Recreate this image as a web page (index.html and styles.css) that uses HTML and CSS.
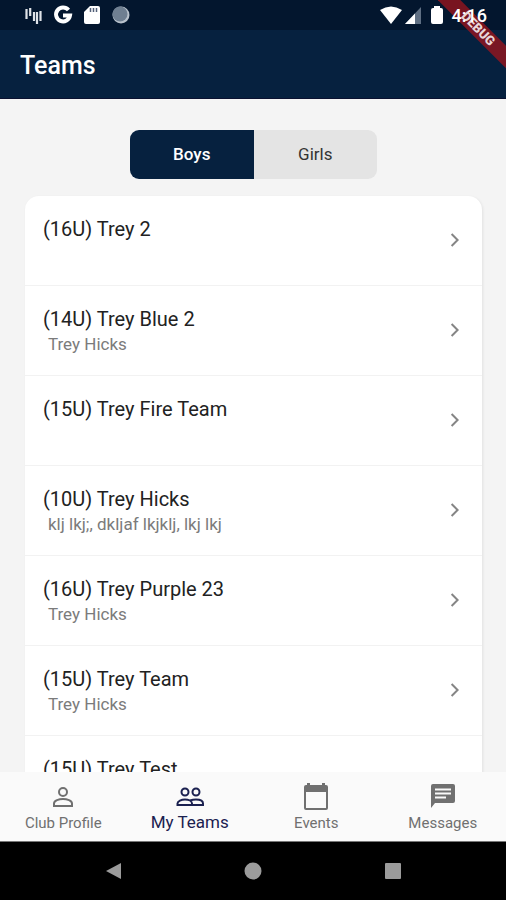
FILE: index.html
```html
<!DOCTYPE html>
<html lang="en">
<head>
    <meta charset="UTF-8">
    <meta name="viewport" content="width=device-width, initial-scale=1.0">
    <title>Teams</title>
    <link rel="stylesheet" href="styles.css">
</head>
<body>
    <div class="debug-corner"><span class="debug-banner">DEBUG</span></div>
    <div class="status-bar">
        <div class="status-left">
            <svg width="18" height="20" viewBox="0 0 18 20" fill="none" stroke="#dfe3e8" stroke-width="2.200">
                <path d="M2.500 4v10M6.200 3v8M10 7v9M13 7v12M16.500 6v10"/>
            </svg>
            <svg width="20" height="20" viewBox="0 0 20 20" fill="none" stroke="#fff" stroke-width="4">
                <path d="M15.500 5A7 7 0 1 0 17 10.500H10"/>
            </svg>
            <svg width="16" height="20" viewBox="0 0 16 20">
                <path fill="#fff" d="M6 1h8q2 0 2 2v14q0 2-2 2H2q-2 0-2-2V7z"/>
                <path stroke="#53617a" stroke-width="1.500" d="M6.500 3v4M9.500 3v4M12.500 3v4"/>
            </svg>
            <svg width="20" height="20" viewBox="0 0 20 20">
                <circle cx="10" cy="10" r="8.500" fill="#b9c2cc"/>
                <circle cx="9" cy="9" r="7.500" fill="#6f7f91"/>
            </svg>
        </div>
        <div class="status-right">
            <svg width="24" height="20" viewBox="0 0 24 20">
                <path fill="#fff" d="M1 5q11-7 22 0L12 19z"/>
            </svg>
            <svg class="signal" width="18" height="20" viewBox="0 0 18 20">
                <path fill="#5f6f83" d="M17 2v17H1z"/>
                <path fill="#fff" d="M11 8.400V19H1z"/>
            </svg>
            <svg class="battery" width="12" height="20" viewBox="0 0 12 20">
                <path fill="#fff" d="M3 1h6v2h1q2 0 2 2v12q0 2-2 2H2q-2 0-2-2V5q0-2 2-2h1z"/>
            </svg>
            <span class="clock">4:16</span>
        </div>
    </div>
    <header>
        <h1>Teams</h1>
    </header>
    <main>
        <div class="toggle">
            <button type="button" class="active">Boys</button>
            <button type="button">Girls</button>
        </div>
        <ul class="team-list">
            <li>
                <a href="#">
                    <div class="team">
                        <h2>(16U) Trey 2</h2>
                    </div>
                    <svg class="chevron" viewBox="0 0 24 24"><path d="M8.600 6l6 6-6 6"/></svg>
                </a>
            </li>
            <li>
                <a href="#">
                    <div class="team">
                        <h2>(14U) Trey Blue 2</h2>
                        <p>Trey Hicks</p>
                    </div>
                    <svg class="chevron" viewBox="0 0 24 24"><path d="M8.600 6l6 6-6 6"/></svg>
                </a>
            </li>
            <li>
                <a href="#">
                    <div class="team">
                        <h2>(15U) Trey Fire Team</h2>
                    </div>
                    <svg class="chevron" viewBox="0 0 24 24"><path d="M8.600 6l6 6-6 6"/></svg>
                </a>
            </li>
            <li>
                <a href="#">
                    <div class="team">
                        <h2>(10U) Trey Hicks</h2>
                        <p>klj lkj;, dkljaf lkjklj, lkj lkj</p>
                    </div>
                    <svg class="chevron" viewBox="0 0 24 24"><path d="M8.600 6l6 6-6 6"/></svg>
                </a>
            </li>
            <li>
                <a href="#">
                    <div class="team">
                        <h2>(16U) Trey Purple 23</h2>
                        <p>Trey Hicks</p>
                    </div>
                    <svg class="chevron" viewBox="0 0 24 24"><path d="M8.600 6l6 6-6 6"/></svg>
                </a>
            </li>
            <li>
                <a href="#">
                    <div class="team">
                        <h2>(15U) Trey Team</h2>
                        <p>Trey Hicks</p>
                    </div>
                    <svg class="chevron" viewBox="0 0 24 24"><path d="M8.600 6l6 6-6 6"/></svg>
                </a>
            </li>
            <li>
                <a href="#">
                    <div class="team">
                        <h2>(15U) Trey Test</h2>
                    </div>
                    <svg class="chevron" viewBox="0 0 24 24"><path d="M8.600 6l6 6-6 6"/></svg>
                </a>
            </li>
        </ul>
    </main>
    <nav class="tabs">
        <a href="#">
            <svg width="28" height="28" viewBox="0 0 28 28" fill="none" stroke="currentColor" stroke-width="2">
                <circle cx="14" cy="9" r="4"/>
                <path d="M5 23v-2.500c0-3 5-4.500 9-4.500s9 1.500 9 4.500V23z"/>
            </svg>
            <span>Club Profile</span>
        </a>
        <a href="#" class="active">
            <svg width="30" height="28" viewBox="0 0 30 28" fill="none" stroke="currentColor" stroke-width="2">
                <circle cx="10" cy="9" r="3.500"/>
                <circle cx="21" cy="9" r="3.500"/>
                <path d="M2.500 22v-1.500c0-2.500 4-4 7.500-4s7 1.500 7 4V22zM15 17.500c2-.7 4-1 6-1 4 0 7 1.500 7 4V22H17"/>
            </svg>
            <span>My Teams</span>
        </a>
        <a href="#">
            <svg width="28" height="28" viewBox="0 0 28 28" fill="currentColor">
                <path fill-rule="evenodd" d="M5 0h3v2h12V0h3v2h1q2 0 2 2v21q0 2-2 2H4q-2 0-2-2V4q0-2 2-2h1zM4 9v16h20V9z"/>
            </svg>
            <span>Events</span>
        </a>
        <a href="#">
            <svg width="28" height="28" viewBox="0 0 28 28">
                <path fill="currentColor" d="M4 1h20q2 0 2 2v15q0 2-2 2H6l-4 5V3q0-2 2-2z"/>
                <path stroke="#fafafa" stroke-width="2" d="M6 6.500h16M6 10.500h16M6 14.500h11"/>
            </svg>
            <span>Messages</span>
        </a>
    </nav>
    <div class="system-nav">
        <button type="button" aria-label="Back">
            <svg width="18" height="18" viewBox="0 0 18 18"><path d="M17 1v16L2 9z"/></svg>
        </button>
        <button type="button" aria-label="Home">
            <svg width="18" height="18" viewBox="0 0 18 18"><circle cx="9" cy="9" r="8.500"/></svg>
        </button>
        <button type="button" aria-label="Recent apps">
            <svg width="18" height="18" viewBox="0 0 18 18"><rect x="1" y="1" width="16" height="16" rx="1"/></svg>
        </button>
    </div>
</body>
</html>
```
FILE: styles.css
```css
* {
    box-sizing: border-box;
}
body {
    font-family: Roboto, Arial, sans-serif;
    margin: 0;
    height: 100vh;
    display: flex;
    flex-direction: column;
    overflow: hidden;
    position: relative;
    background-color: #f4f4f4;
    color: #222;
}
svg {
    display: block;
    flex: none;
}
a {
    color: inherit;
    text-decoration: none;
}
button {
    border: none;
    padding: 0;
    font-family: inherit;
    cursor: pointer;
}

/* Status bar */
.status-bar {
    display: flex;
    justify-content: space-between;
    align-items: center;
    height: 30px;
    flex: none;
    padding: 0 19px 0 24px;
    background-color: #03162e;
    color: white;
}
.status-left {
    display: flex;
    gap: 11px;
}
.status-right {
    display: flex;
    align-items: center;
}
.signal {
    margin-left: 1px;
}
.battery {
    margin: 0 9px;
}
.clock {
    font-size: 18px;
    font-weight: 500;
    position: relative;
    z-index: 2;
}
.debug-corner {
    position: absolute;
    top: 0;
    right: 0;
    width: 68px;
    height: 68px;
    overflow: hidden;
    z-index: 1;
}
.debug-banner {
    position: absolute;
    top: 21px;
    left: -20px;
    width: 120px;
    transform: rotate(45deg);
    background-color: rgba(160, 20, 28, 0.75);
    color: #e8d5d8;
    font-size: 13px;
    font-weight: 900;
    line-height: 16px;
    text-align: center;
}

header {
    display: flex;
    align-items: center;
    flex: none;
    height: 69px;
    padding: 2px 20px 0;
    background-color: #06213f;
    border-bottom: 1px solid #0a1130;
    color: white;
}
h1 {
    margin: 0;
    font-size: 25px;
    font-weight: 500;
}

main {
    flex: 1;
    min-height: 0;
    overflow: hidden;
    padding: 31px 24px 0 25px;
}
.toggle {
    display: flex;
    width: 247px;
    height: 49px;
    margin: 0 auto 17px;
    border-radius: 9px;
    overflow: hidden;
}
.toggle button {
    flex: 1;
    padding-bottom: 2px;
    background-color: #e4e4e4;
    color: #333;
    font-size: 17px;
}
.toggle .active {
    background-color: #06213f;
    color: white;
    font-weight: 500;
}

/* Team list */
.team-list {
    list-style: none;
    margin: 0;
    padding: 0;
    background-color: white;
    border-radius: 14px;
    box-shadow: 1px 1px 3px rgba(0, 0, 0, 0.08);
}
.team-list a {
    display: flex;
    align-items: center;
    justify-content: space-between;
    height: 90px;
    padding: 0 15px 1px 18px;
    border-bottom: 1px solid #f2f2f2;
}
.team {
    align-self: flex-start;
    padding-top: 21px;
}
.team h2 {
    margin: 0;
    font-size: 20px;
    font-weight: 400;
    line-height: 24px;
}
.team p {
    margin: 1px 0 0 5px;
    color: #7b7b7b;
    font-size: 17px;
    line-height: 24px;
}
.chevron {
    width: 24px;
    height: 24px;
    fill: none;
    stroke: #858585;
    stroke-width: 2;
}

/* Bottom tabs */
.tabs {
    display: flex;
    flex: none;
    height: 70px;
    background-color: #fafafa;
    border-bottom: 1px solid #777;
}
.tabs a {
    flex: 1;
    display: flex;
    flex-direction: column;
    align-items: center;
    padding-top: 11px;
    color: #707070;
    font-size: 15px;
    line-height: 24px;
}
.tabs .active {
    color: #1b2150;
    font-size: 17px;
    line-height: 22px;
}
.system-nav {
    display: flex;
    justify-content: center;
    align-items: center;
    gap: 122px;
    flex: none;
    height: 58px;
    background-color: black;
}
.system-nav button {
    background: none;
}
.system-nav svg {
    fill: #9b9b9b;
}
```
